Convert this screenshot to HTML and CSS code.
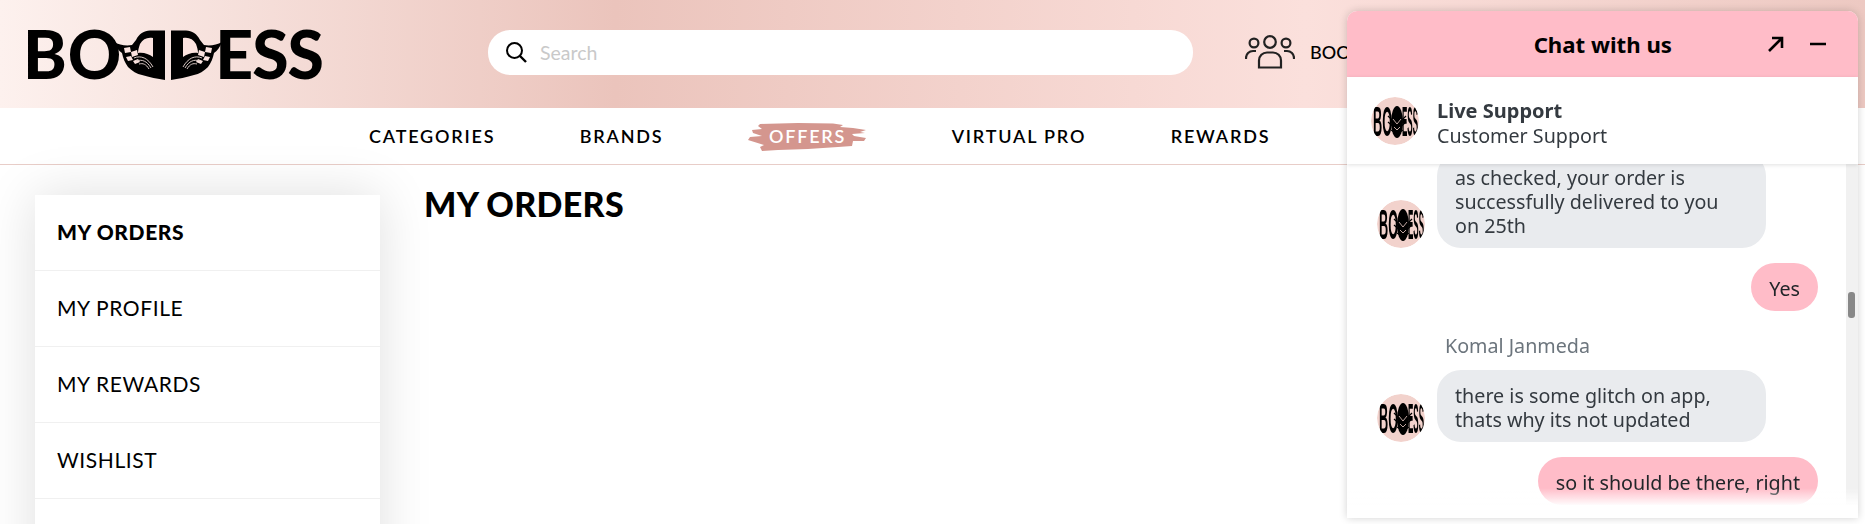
FILE: index.html
```html
<!DOCTYPE html>
<html lang="en">
  <head>
    <meta charset="UTF-8" />
    <meta name="viewport" content="width=device-width, initial-scale=1.0" />
    <title>My Orders</title>
    <link rel="stylesheet" href="styles.css">
  </head>
  <body>
    <svg class="defs" width="0" height="0">
      <symbol id="wingHalf" viewBox="0 0 54 50">
        <path d="M53 0.5H38C32 0.5 27 4 24 10L20 15C14 16 7 15 2 12C4 17 7 21 10 23C11 28 13 33 16 37C20 41 25 44 30 45C37 47 46 49 53 50Z" fill="#000" />
        <path d="M41 8C35 7 31 9 28 14C27 17 26 20 26 23C31 22 37 24 41 27Z" fill="#fbe3df" />
        <path d="M12 18l6-1 1 5-6 1zM19 22l6-2 1 5-6 2zM14 27l5-1 2 4-5 1zM21 31l5-2 2 3-5 2z" fill="#fbe3df" />
        <path d="M22 28C29 25 36 28 41 37M24 31C30 29 35 31 39 38M27 34C31 33 34 34 37 39" fill="none" stroke="#d9c8c4" stroke-width="1" />
      </symbol>
    </svg>

    <header class="top-bar">
      <a class="logo">
        <span class="logo-text">BO</span>
        <span class="logo-mark">
          <svg class="wing" width="54" height="50"><use href="#wingHalf" /></svg>
          <svg class="wing wing-right" width="54" height="50"><use href="#wingHalf" /></svg>
        </span>
        <span class="logo-text logo-end">ESS</span>
      </a>
      <div class="search">
        <svg class="search-icon" width="24" height="24" viewBox="0 0 24 24">
          <circle cx="10.5" cy="10.5" r="7.5" fill="none" stroke="#000" stroke-width="2" />
          <path d="M16 16l6 6" stroke="#000" stroke-width="2.4" />
        </svg>
        <span class="search-text">Search</span>
      </div>
      <div class="book">
        <svg width="50" height="34" viewBox="0 0 50 34" fill="none" stroke="#222" stroke-width="2.2">
          <circle cx="25" cy="7" r="5.8" />
          <circle cx="9" cy="8" r="4.4" />
          <circle cx="41" cy="8" r="4.4" />
          <path d="M14 32.5v-7a8 8 0 0 1 8-8h6a8 8 0 0 1 8 8v7z" />
          <path d="M1 24v-1a7 7 0 0 1 7-7h3M49 24v-1a7 7 0 0 0-7-7h-3" />
        </svg>
        <span>BOOK</span>
      </div>
    </header>

    <nav class="main-nav">
      <a>CATEGORIES</a>
      <a>BRANDS</a>
      <a class="offers">
        <svg class="brush" width="118" height="30" viewBox="0 0 118 30">
          <path d="M12 2L50 1 85 1.500 95 3 92 5 105 6 118 8 112 10 117 11 104 12 106 14 118 16 116 19 105 19 104 24 90 25 60 27 30 28 14 29 12 25 16 23 0 18 2 15 14 14 5 11 4 8 14 7 10 4z" fill="#d4968e" />
        </svg>
        <span>OFFERS</span>
      </a>
      <a>VIRTUAL PRO</a>
      <a>REWARDS</a>
    </nav>

    <div class="page">
      <ul class="side-menu">
        <li class="active">MY ORDERS</li>
        <li>MY PROFILE</li>
        <li>MY REWARDS</li>
        <li>WISHLIST</li>
      </ul>
      <main class="orders">
        <h1>MY ORDERS</h1>
      </main>
    </div>

    <section class="chat">
      <div class="chat-head">
        <h2>Chat with us</h2>
        <svg class="chat-btn chat-expand" width="18" height="18" viewBox="0 0 18 18" fill="none" stroke="#000" stroke-width="2.6">
          <path d="M3 16L15 4M6 3h10v10" />
        </svg>
        <svg class="chat-btn" width="18" height="18" viewBox="0 0 18 18">
          <path d="M1 9h16" stroke="#000" stroke-width="2.4" />
        </svg>
      </div>
      <div class="agent">
        <svg class="avatar" width="48" height="48" viewBox="0 0 48 48">
          <circle cx="24" cy="24" r="24" fill="#f2d2cc" />
          <text class="mini-text" transform="translate(2 39) scale(.295 1)">BO</text>
          <text class="mini-text" transform="translate(31 39) scale(.186 1)">ESS</text>
          <ellipse cx="26" cy="25" rx="6" ry="16" fill="#000" />
          <path d="M17 19l9 9 9-9M17 25l9 8 9-8M20 33l6 4 6-4" fill="none" stroke="#000" stroke-width="1.200" />
          <path d="M22 22l4 5 4-5M23 30l3 3 3-3" fill="none" stroke="#f2d2cc" stroke-width="0.800" />
        </svg>
        <div>
          <div class="agent-name">Live Support</div>
          <div class="agent-role">Customer Support</div>
        </div>
      </div>
      <div class="chat-body">
        <div class="messages">
          <div class="msg">
            <svg class="avatar" width="48" height="48" viewBox="0 0 48 48">
              <circle cx="24" cy="24" r="24" fill="#f2d2cc" />
              <text class="mini-text" transform="translate(2 39) scale(.295 1)">BO</text>
              <text class="mini-text" transform="translate(31 39) scale(.186 1)">ESS</text>
              <ellipse cx="26" cy="25" rx="6" ry="16" fill="#000" />
              <path d="M17 19l9 9 9-9M17 25l9 8 9-8M20 33l6 4 6-4" fill="none" stroke="#000" stroke-width="1.200" />
              <path d="M22 22l4 5 4-5M23 30l3 3 3-3" fill="none" stroke="#f2d2cc" stroke-width="0.800" />
            </svg>
            <div class="bubble">as checked, your order is successfully delivered to you on 25th</div>
          </div>
          <div class="msg mine"><div class="bubble">Yes</div></div>
          <div class="sender">Komal Janmeda</div>
          <div class="msg">
            <svg class="avatar" width="48" height="48" viewBox="0 0 48 48">
              <circle cx="24" cy="24" r="24" fill="#f2d2cc" />
              <text class="mini-text" transform="translate(2 39) scale(.295 1)">BO</text>
              <text class="mini-text" transform="translate(31 39) scale(.186 1)">ESS</text>
              <ellipse cx="26" cy="25" rx="6" ry="16" fill="#000" />
              <path d="M17 19l9 9 9-9M17 25l9 8 9-8M20 33l6 4 6-4" fill="none" stroke="#000" stroke-width="1.200" />
              <path d="M22 22l4 5 4-5M23 30l3 3 3-3" fill="none" stroke="#f2d2cc" stroke-width="0.800" />
            </svg>
            <div class="bubble">there is some glitch on app, thats why its not updated</div>
          </div>
          <div class="msg mine"><div class="bubble">so it should be there, right</div></div>
        </div>
        <div class="scroll-track"><div class="scroll-thumb"></div></div>
      </div>
    </section>
  </body>
</html>
```

FILE: styles.css
```css
* {
  box-sizing: border-box;
  margin: 0;
  padding: 0;
}

html,
body {
  height: 100%;
  overflow: hidden;
}

body {
  font-family: "Lato", sans-serif;
  background-color: #fff;
  color: #000;
}

.defs {
  position: absolute;
}

.top-bar {
  height: 108px;
  display: flex;
  align-items: center;
  padding-left: 23px;
  background: linear-gradient(to right, #fdf1ee, #ebc4bc 33%, #fbe0dc 70%, #edc9c2);
}

.logo {
  width: 301px;
  display: flex;
  align-items: center;
}

.logo-text {
  font-size: 66px;
  font-weight: 900;
  line-height: 50px;
  letter-spacing: 1px;
}

.logo-end {
  letter-spacing: -1px;
  margin-left: -9px;
}

.logo-mark {
  display: flex;
  margin: 2px 0 0 -10px;
  gap: 4px;
  flex-shrink: 0;
}

.wing-right {
  transform: scaleX(-1);
}

.search {
  width: 705px;
  height: 45px;
  margin: -4px 0 0 164px;
  display: flex;
  align-items: center;
  gap: 12px;
  padding-left: 16px;
  background-color: #fff;
  border-radius: 22px;
}

.search-text {
  font-size: 19.500px;
  color: #c9c9c9;
}

.book {
  display: flex;
  align-items: center;
  gap: 15px;
  margin: -4px 0 0 52px;
  font-size: 18px;
  font-weight: 500;
}

.main-nav {
  height: 57px;
  display: flex;
  align-items: center;
  gap: 84.500px;
  padding-left: 369px;
  border-bottom: 1px solid #e8cdc8;
  font-size: 18px;
  font-weight: 600;
  letter-spacing: 1.800px;
}

.offers {
  position: relative;
  padding: 0 21px;
  color: #fff;
}

.offers span {
  position: relative;
}

.brush {
  position: absolute;
  left: 0;
  top: -3px;
  filter: blur(0.5px);
}

.page {
  display: flex;
}

.side-menu {
  width: 345px;
  min-height: 400px;
  margin: 30px 0 0 35px;
  list-style: none;
  background-color: #fff;
  box-shadow: 0 0 50px rgba(0, 0, 0, 0.13);
  font-size: 21px;
}

.side-menu li {
  height: 76px;
  display: flex;
  align-items: center;
  padding: 0 0 2px 22px;
  border-bottom: 1px solid #f0f0f0;
  letter-spacing: 0.600px;
}

.side-menu .active {
  font-weight: 900;
}

.orders {
  padding: 18px 0 0 44px;
}

.orders h1 {
  font-size: 34px;
  font-weight: 900;
  letter-spacing: 0.300px;
}

.chat {
  position: fixed;
  top: 11px;
  left: 1347px;
  width: 511px;
  height: 507px;
  display: flex;
  flex-direction: column;
  background-color: #fff;
  border-radius: 10px 10px 0 0;
  box-shadow: 0 0 8px rgba(0, 0, 0, 0.18);
  font-family: "Noto Sans", sans-serif;
  color: #343a40;
  overflow: hidden;
}

.chat-head {
  height: 66px;
  flex-shrink: 0;
  display: flex;
  align-items: center;
  justify-content: flex-end;
  padding-right: 31px;
  background-color: #ffbcc8;
}

.chat-head h2 {
  margin-right: 94px;
  font-size: 22.200px;
  font-weight: 700;
  color: #000;
}

.chat-expand {
  margin-right: 25px;
}

.agent {
  height: 87px;
  flex-shrink: 0;
  display: flex;
  align-items: center;
  gap: 18px;
  padding: 0 0 0 24px;
  background-color: #fff;
  box-shadow: 0 1px 4px rgba(0, 0, 0, 0.12);
  position: relative;
  z-index: 1;
  font-size: 19.700px;
  line-height: 25px;
}

.agent > div {
  padding-top: 4px;
}

.agent-name {
  font-size: 20px;
  font-weight: 700;
}

.avatar {
  flex-shrink: 0;
  border-radius: 50%;
}

.mini-text {
  font-family: "Liberation Sans", sans-serif;
  font-size: 43px;
  font-weight: 700;
  fill: #000;
}

.chat-body {
  flex: 1;
  min-height: 0;
  display: flex;
  position: relative;
}

.chat-body::after {
  content: "";
  position: absolute;
  left: 0;
  right: 0;
  bottom: 0;
  height: 30px;
  background: linear-gradient(to bottom, rgba(255, 255, 255, 0), #fff 60%);
}

.messages {
  flex: 1;
  display: flex;
  flex-direction: column;
  justify-content: flex-end;
  overflow: hidden;
  padding: 0 28px 13px 30px;
  font-size: 19.700px;
  line-height: 24px;
}

.msg {
  display: flex;
  flex-shrink: 0;
  align-items: flex-end;
  gap: 12px;
  margin-bottom: 15px;
}

.msg:last-child {
  margin-bottom: 0;
}

.bubble {
  width: 329px;
  padding: 14px 24px 10px 18px;
  background-color: #e9ebee;
  border-radius: 24px;
}

.mine {
  justify-content: flex-end;
}

.mine .bubble {
  width: auto;
  padding: 14px 18px 10px;
  background-color: #ffbcc8;
  color: #212529;
}

.sender {
  margin: 8px 0 12px 68px;
  color: #6c757d;
  flex-shrink: 0;
}

.scroll-track {
  width: 12px;
  flex-shrink: 0;
  padding: 128px 3px 0 2px;
  background-color: #f1f1f1;
}

.scroll-thumb {
  height: 26px;
  background-color: #888;
  border-radius: 3px;
}
```
